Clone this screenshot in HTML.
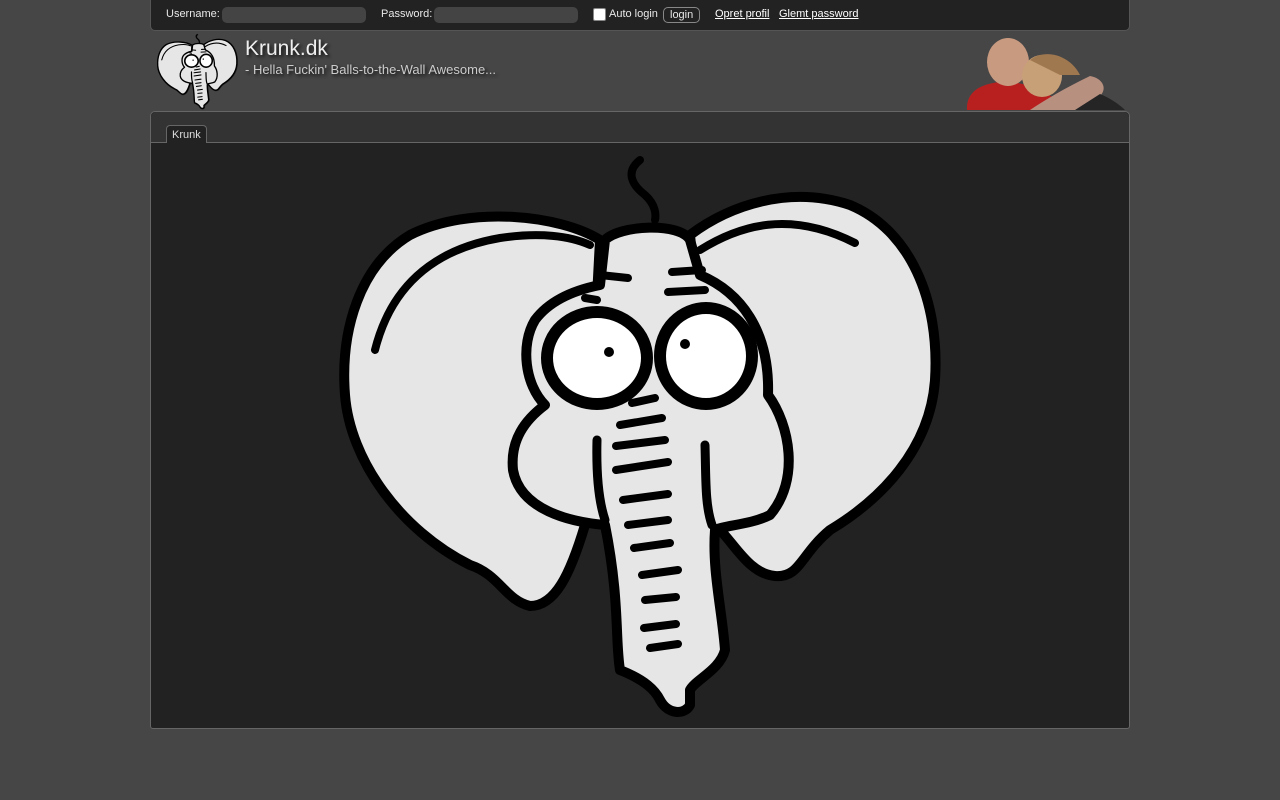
<!DOCTYPE html>
<html><head><meta charset="utf-8"><style>
body{margin:0;background:#464646;font-family:"Liberation Sans",sans-serif;width:1280px;height:800px;overflow:hidden;position:relative}
.top{position:absolute;left:150px;top:-5px;width:978px;height:34px;background:#222;border:1px solid #555;border-radius:0 0 5px 5px}
.t{position:absolute;top:8px;font-size:11px;color:#e8e8e8}
.in{position:absolute;top:7px;height:16px;background:#444;border-radius:5px}
.t a{color:#fff;text-decoration:underline}
.panel{position:absolute;left:150px;top:111px;width:978px;height:616px;background:#222;border:1px solid #666;border-radius:5px 5px 3px 3px}
.strip{position:absolute;left:0;top:0;right:0;height:30px;background:#333;border-bottom:1px solid #666;border-radius:5px 5px 0 0}
.tab{position:absolute;left:15px;top:13px;height:17px;padding:0 5px;background:#222;border:1px solid #666;border-bottom:none;border-radius:4px 4px 0 0;color:#ddd;font-size:11px;line-height:18px}
h1{position:absolute;left:245px;top:37px;margin:0;font-weight:normal;font-size:21px;color:#eee;text-shadow:2px 2px 3px #111}
.sub{position:absolute;left:245px;top:62px;font-size:13px;color:#ccc;text-shadow:2px 2px 3px #111}
</style></head><body>
<div class="top"></div>
<div class="t" style="left:166px">Username:</div><div class="in" style="left:222px;width:144px"></div>
<div class="t" style="left:381px">Password:</div><div class="in" style="left:434px;width:144px"></div>
<div style="position:absolute;left:593px;top:8px;width:11px;height:11px;background:#fff;border:1px solid #888;border-radius:2px"></div>
<div class="t" style="left:609px">Auto login</div>
<div class="t" style="left:663px;top:7px;border:1px solid #888;border-radius:5px;padding:0 6px;line-height:14px;height:14px">login</div>
<div class="t" style="left:715px"><a>Opret profil</a></div>
<div class="t" style="left:779px"><a>Glemt password</a></div>
<h1>Krunk.dk</h1>
<div class="sub">- Hella Fuckin' Balls-to-the-Wall Awesome...</div>
<svg width="1280" height="800" style="position:absolute;left:0;top:0;pointer-events:none">
<defs>
<g id="el" stroke="#000" stroke-linecap="round" stroke-linejoin="round" fill="none">
<path d="M600 240 C560 215 470 205 410 235 C360 265 340 330 345 395 C350 460 400 530 470 565 C500 575 505 600 530 606 C555 606 570 575 585 525 Z" fill="#e6e6e6" stroke-width="10"/>
<path d="M690 235 C730 205 790 185 850 205 C910 230 940 300 935 380 C930 450 880 500 830 530 C800 555 800 578 775 576 C750 574 735 545 720 530 Z" fill="#e6e6e6" stroke-width="10"/>
<path d="M375 350 C390 290 430 250 500 238 C540 232 570 236 590 245" stroke-width="8"/>
<path d="M700 250 C740 225 790 210 855 243" stroke-width="8"/>
<path d="M605 240 C620 225 680 222 690 240 L700 275 C740 292 770 330 768 395 C790 425 800 480 770 515 C750 525 725 525 715 530 C712 570 722 610 725 650 C720 670 695 680 690 690 L690 705 C685 715 668 715 660 700 C655 690 645 680 620 670 C615 640 620 600 605 525 C570 522 520 510 513 470 C510 440 525 420 545 405 C525 385 520 345 535 320 C550 300 575 290 600 285 Z" fill="#e6e6e6" stroke-width="10"/>
<path d="M640 160 C625 172 632 185 645 195 C656 205 656 215 655 220" stroke-width="8"/>
<path d="M600 275 L628 278 M672 272 L702 270 M585 298 L597 300 M668 292 L705 290" stroke-width="8"/>
<ellipse cx="597" cy="358" rx="50" ry="46" fill="#fff" stroke-width="12"/>
<ellipse cx="706" cy="356" rx="46" ry="48" fill="#fff" stroke-width="12"/>
<circle cx="609" cy="352" r="5" fill="#000" stroke="none"/>
<circle cx="685" cy="344" r="5" fill="#000" stroke="none"/>
<path d="M632 403 L655 398 M620 425 L662 418 M616 446 L665 440 M616 470 L668 462 M623 500 L668 494 M628 525 L668 520 M634 548 L670 543 M642 575 L678 570 M645 600 L676 597 M644 628 L676 624 M650 648 L678 644" stroke-width="8"/>
<path d="M597 440 C596 480 600 505 605 520 M705 445 C706 480 705 505 712 525" stroke-width="9"/>
</g>
</defs>
<use href="#el" transform="translate(111.5 13) scale(0.134)" style="filter:drop-shadow(2px 2px 2px #111)"/>
<g>
<path d="M967 110 C966 92 980 84 1000 82 C1025 80 1040 92 1060 100 L1060 110 Z" fill="#b82020"/>
<ellipse cx="1008" cy="62" rx="21" ry="24" fill="#c89a80"/>
<ellipse cx="1042" cy="76" rx="20" ry="21" fill="#c8a078"/>
<path d="M1030 60 C1045 48 1070 55 1080 75 L1060 75 Z" fill="#a07850"/>
<path d="M1030 110 C1045 100 1065 88 1090 76 C1102 78 1108 88 1100 96 C1090 104 1082 110 1078 110 Z" fill="#b89080"/>
<path d="M1075 110 L1100 94 C1110 98 1120 105 1125 110 Z" fill="#252525"/>
</g>
</svg>
<div class="panel"><div class="strip"><div class="tab">Krunk</div></div></div>
<svg width="1280" height="800" style="position:absolute;left:0;top:0"><use href="#el"/></svg>
</body></html>
